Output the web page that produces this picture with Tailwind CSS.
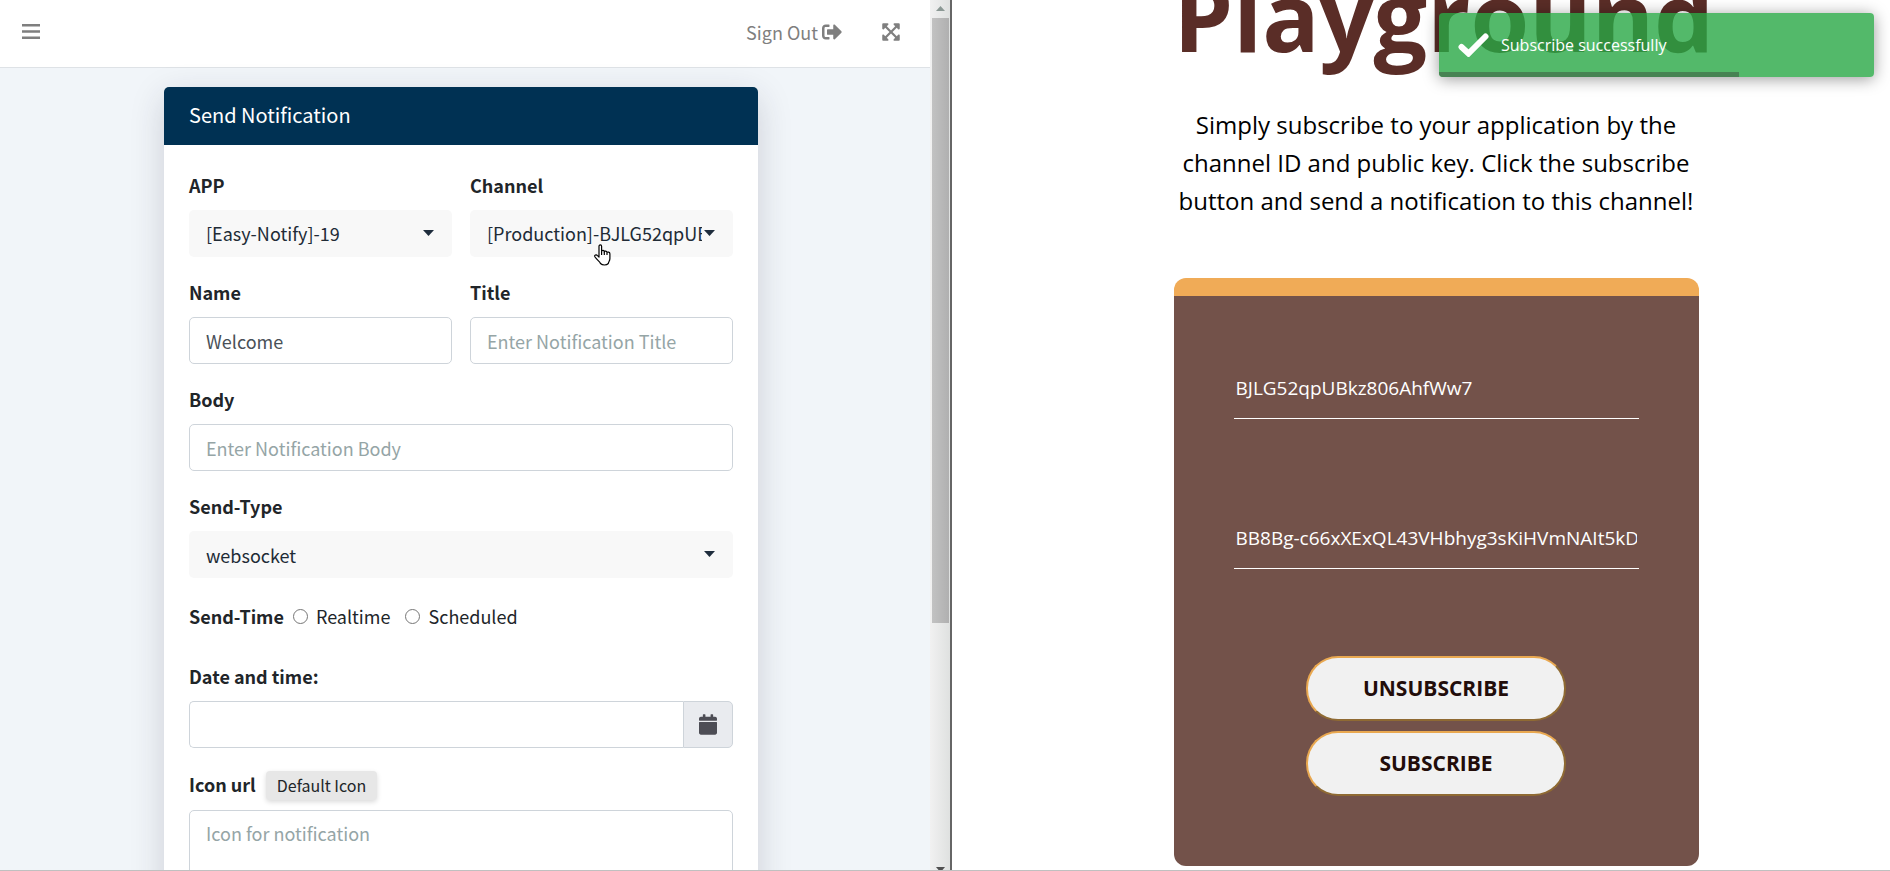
<!DOCTYPE html>
<html lang="en">
<head>
<meta charset="utf-8">
<title>Easy Notify</title>
<script src="https://cdn.jsdelivr.net/npm/@tailwindcss/browser@4"></script>
</head>
<body class="bg-white">
<div class="flex h-screen overflow-hidden border-b border-[#c0c0c0]">

  <!-- Admin panel -->
  <section class="flex w-[950px] shrink-0 bg-[#f1f5f9] font-['Noto_Sans_CJK_SC',sans-serif] text-lg text-[#212529]">
    <div class="min-w-0 flex-1">
      <header class="flex h-[68px] items-center justify-between border-b border-[#dee2e6] bg-white pr-[30px] pb-1 pl-[22px] text-[#7f7f7f]">
        <button type="button" aria-label="Toggle menu">
          <svg class="h-[15px] w-[18px]" viewBox="0 0 18 15" fill="currentColor"><path d="M0 0h18v2.600H0zM0 6.200h18v2.600H0zM0 12.400h18V15H0z"/></svg>
        </button>
        <nav class="flex items-center gap-10">
          <a href="#" class="flex items-center gap-1">Sign Out
            <svg class="size-5" viewBox="0 0 512 512" fill="currentColor" aria-hidden="true"><path d="M497 273L329 441c-15 15-41 4.500-41-17v-96H152c-13.300 0-24-10.700-24-24v-96c0-13.300 10.700-24 24-24h136V88c0-21.400 25.900-32 41-17l168 168c9.300 9.400 9.300 24.600 0 34zM192 436v-40c0-6.600-5.400-12-12-12H96c-17.700 0-32-14.300-32-32V160c0-17.700 14.300-32 32-32h84c6.600 0 12-5.400 12-12V76c0-6.600-5.400-12-12-12H96c-53 0-96 43-96 96v192c0 53 43 96 96 96h84c6.600 0 12-5.400 12-12z"/></svg>
          </a>
          <button type="button" aria-label="Full screen">
            <svg class="h-5 w-[18px]" viewBox="0 0 448 512" fill="currentColor"><path d="M448 344v112a23.940 23.940 0 0 1-24 24H312c-21.390 0-32.090-25.900-17-41l36.200-36.200L224 295.600 116.770 402.900 153 439c15.090 15.100 4.390 41-17 41H24a23.940 23.940 0 0 1-24-24V344c0-21.400 25.890-32.100 41-17l36.190 36.200L184.460 256 77.180 148.700 41 185c-15.100 15.100-41 4.400-41-17V56a23.940 23.940 0 0 1 24-24h112c21.390 0 32.090 25.900 17 41l-36.200 36.200L224 216.400l107.230-107.300L295 73c-15.090-15.100-4.390-41 17-41h112a23.940 23.940 0 0 1 24 24v112c0 21.400-25.890 32.100-41 17l-36.190-36.200L263.540 256l107.280 107.300L407 327.100c15.100-15.200 41-4.500 41 16.900z"/></svg>
          </button>
        </nav>
      </header>

      <main class="mt-[19px] mr-[172px] ml-[164px] overflow-hidden rounded-[5px] bg-white shadow-[0_10px_34px_rgba(40,40,60,0.18)]">
        <h1 class="bg-[#003153] px-[25px] pb-[2px] text-xl leading-[56px] text-white">Send Notification</h1>
        <form class="px-[25px] pt-[26px] pb-6">
          <div class="grid grid-cols-2 gap-x-[18px] gap-y-[21px]">
            <div>
              <label for="app" class="mb-[11px] block leading-7 font-bold">APP</label>
              <div class="relative">
                <select id="app" class="h-[47px] w-full appearance-none rounded-[5px] bg-[#f8f8f8] pr-[31px] pb-[2px] pl-[17px] text-[#212b36]"><option>[Easy-Notify]-19</option></select>
                <svg class="pointer-events-none absolute top-5 right-[18px] h-[6px] w-[11px]" viewBox="0 0 11 6" fill="#1f2d3d"><path d="M0 0h11L5.500 6z"/></svg>
              </div>
            </div>
            <div>
              <label for="channel" class="mb-[11px] block leading-7 font-bold">Channel</label>
              <div class="relative">
                <select id="channel" class="h-[47px] w-full appearance-none rounded-[5px] bg-[#f8f8f8] pr-[31px] pb-[2px] pl-[17px] text-[#212b36]"><option>[Production]-BJLG52qpUBkz806AhfWw7</option></select>
                <svg class="pointer-events-none absolute top-5 right-[18px] h-[6px] w-[11px]" viewBox="0 0 11 6" fill="#1f2d3d"><path d="M0 0h11L5.500 6z"/></svg>
                <!-- Hand pointer -->
                <svg class="pointer-events-none absolute top-[34px] left-[124px] h-[22px] w-[17px]" viewBox="0 0 17 22" fill="#fff" stroke="#000" stroke-width="1.200" stroke-linejoin="round"><path d="M5 13V2.200C5 .3 7.600.3 7.600 2.200V7.500C7.900 6 10.300 6.100 10.300 7.900C10.700 6.700 13 6.900 13 8.600C13.500 7.600 15.900 7.900 15.900 9.800V14.500C15.900 17 14.600 17.600 14.300 19.500C12.500 21.500 8.500 21.500 6.500 19.500C6 17.800 3.300 16.200 1 13C-.2 11 2.300 10.300 3.500 11.600z"/><path d="M7.600 7.500V11M10.300 8V11M13 8.800V11" fill="none"/></svg>
              </div>
            </div>
            <div>
              <label for="name" class="mb-[11px] block leading-7 font-bold">Name</label>
              <input id="name" type="text" value="Welcome" class="h-[47px] w-full rounded-[5px] border border-[#ced4da] px-4 text-[#495057]">
            </div>
            <div>
              <label for="title" class="mb-[11px] block leading-7 font-bold">Title</label>
              <input id="title" type="text" placeholder="Enter Notification Title" class="h-[47px] w-full rounded-[5px] border border-[#ced4da] px-4 placeholder:text-[#95a5a6]">
            </div>
            <div class="col-span-2">
              <label for="body" class="mb-[11px] block leading-7 font-bold">Body</label>
              <input id="body" type="text" placeholder="Enter Notification Body" class="h-[47px] w-full rounded-[5px] border border-[#ced4da] px-4 placeholder:text-[#95a5a6]">
            </div>
            <div class="col-span-2">
              <label for="send-type" class="mb-[11px] block leading-7 font-bold">Send-Type</label>
              <div class="relative">
                <select id="send-type" class="h-[47px] w-full appearance-none rounded-[5px] bg-[#f8f8f8] pr-[31px] pl-[17px] text-[#212b36]"><option>websocket</option></select>
                <svg class="pointer-events-none absolute top-5 right-[18px] h-[6px] w-[11px]" viewBox="0 0 11 6" fill="#1f2d3d"><path d="M0 0h11L5.500 6z"/></svg>
              </div>
            </div>
          </div>

          <fieldset class="mt-6 flex items-center leading-7">
            <legend class="float-left mr-[9px] font-bold">Send-Time</legend>
            <label class="mr-[15px] flex items-center gap-2"><input type="radio" name="time" class="size-[15px]">Realtime</label>
            <label class="flex items-center gap-2"><input type="radio" name="time" class="size-[15px]">Scheduled</label>
          </fieldset>

          <label for="date" class="mt-8 mb-[11px] block leading-7 font-bold">Date and time:</label>
          <div class="flex h-[47px]">
            <input id="date" type="text" class="min-w-0 flex-1 rounded-l-[5px] border border-r-0 border-[#ced4da] px-4">
            <button type="button" aria-label="Pick a date" class="flex w-[50px] items-center justify-center rounded-r-[5px] border border-[#ced4da] bg-[#e9ebef] text-[#4d4d55]">
              <svg class="h-[21px] w-[18px]" viewBox="0 0 448 512" fill="currentColor"><path d="M12 192h424c6.600 0 12 5.400 12 12v260c0 26.500-21.500 48-48 48H48c-26.500 0-48-21.500-48-48V204c0-6.600 5.400-12 12-12zm436-44v-36c0-26.500-21.500-48-48-48h-48V12c0-6.600-5.400-12-12-12h-40c-6.600 0-12 5.400-12 12v52H160V12c0-6.600-5.400-12-12-12h-40c-6.600 0-12 5.400-12 12v52H48C21.500 64 0 85.500 0 112v36c0 6.600 5.400 12 12 12h424c6.600 0 12-5.400 12-12z"/></svg>
            </button>
          </div>

          <div class="mt-[23px] mb-[10px] flex items-start gap-[10px]">
            <label for="icon" class="leading-[26px] font-bold">Icon url</label>
            <button type="button" class="rounded-[4px] bg-[#e7e7e7] px-[11px] text-base leading-[29px] shadow-[0_2px_5px_rgba(0,0,0,0.15)]">Default Icon</button>
          </div>
          <textarea id="icon" placeholder="Icon for notification" class="block h-28 w-full resize-none rounded-[5px] border border-[#ced4da] px-4 py-2 leading-7 placeholder:text-[#95a5a6]"></textarea>
        </form>
      </main>
    </div>

    <!-- Scrollbar -->
    <div class="flex w-5 flex-col items-center bg-linear-to-r from-[#f1f1f1] to-[#dfe1e0] pt-[6px] pl-px" aria-hidden="true">
      <svg class="h-[5px] w-[9px]" viewBox="0 0 9 5" fill="#8b9894"><path d="M4.500 0L9 5H0z"/></svg>
      <div class="mt-[7px] h-[70%] w-[17px] bg-linear-to-r from-[#c2c2c2] to-[#b0b0b0]"></div>
      <svg class="mt-auto h-[3px] w-[9px]" viewBox="0 0 9 3" fill="#505050"><path d="M0 0h9L6.500 3h-4z"/></svg>
    </div>
  </section>

  <!-- Subscriber page -->
  <section class="relative min-w-0 flex-1 border-l-2 border-[#666] bg-white pl-[30px] font-['Open_Sans',sans-serif] text-black">
    <div class="mx-auto w-[525px]">
      <div class="flex h-[106px] flex-col justify-end pb-7">
        <h2 class="text-[95px] leading-[126px] font-bold text-[#5a2d27]">Playground</h2>
      </div>
      <p class="text-center text-2xl leading-[38px]">Simply subscribe to your application by the channel ID and public key. Click the subscribe button and send a notification to this channel!</p>
      <form class="mt-[58px] rounded-xl border-t-[18px] border-[#f0ab57] bg-[#73524a] px-[60px] pt-[62px] pb-[70px]">
        <input aria-label="Channel ID" type="text" value="BJLG52qpUBkz806AhfWw7" class="block h-[61px] w-full border-b border-white px-[2px] text-[19px] text-white">
        <input aria-label="Public key" type="text" value="BB8Bg-c66xXExQL43VHbhyg3sKiHVmNAIt5kDx0a" class="mt-[89px] block h-[61px] w-full border-b border-white px-[2px] text-[19px] text-white">
        <div class="mt-[87px] flex flex-col items-center gap-[10px]">
          <button type="button" class="h-[65px] w-[260px] rounded-[32px] border-2 border-t-[#e9a850] border-r-[#8f6a33] border-b-[#8f6a33] border-l-[#e9a850] bg-[#f1f1f1] text-[21px] font-bold text-[#220d0a]">UNSUBSCRIBE</button>
          <button type="button" class="h-[65px] w-[260px] rounded-[32px] border-2 border-t-[#e9a850] border-r-[#8f6a33] border-b-[#8f6a33] border-l-[#e9a850] bg-[#f1f1f1] text-[21px] font-bold text-[#220d0a]">SUBSCRIBE</button>
        </div>
      </form>
    </div>

    <!-- Toast -->
    <div role="status" class="absolute top-[13px] right-4 flex h-16 w-[435px] items-center gap-3 overflow-hidden rounded-[4px] bg-[#28a745]/80 px-[19px] text-base text-white shadow-[0_2px_16px_rgba(0,0,0,0.4)]">
      <svg class="h-6 w-[31px]" viewBox="0 0 31 24" fill="none" stroke="#fff" stroke-width="6" stroke-linecap="round" aria-hidden="true"><path d="M3.500 14L10.500 20.500L27.500 3.500"/></svg>
      <span>Subscribe successfully</span>
      <div class="absolute bottom-0 left-0 h-[5px] w-[69%] bg-[#478353]"></div>
    </div>
  </section>
</div>
</body>
</html>
